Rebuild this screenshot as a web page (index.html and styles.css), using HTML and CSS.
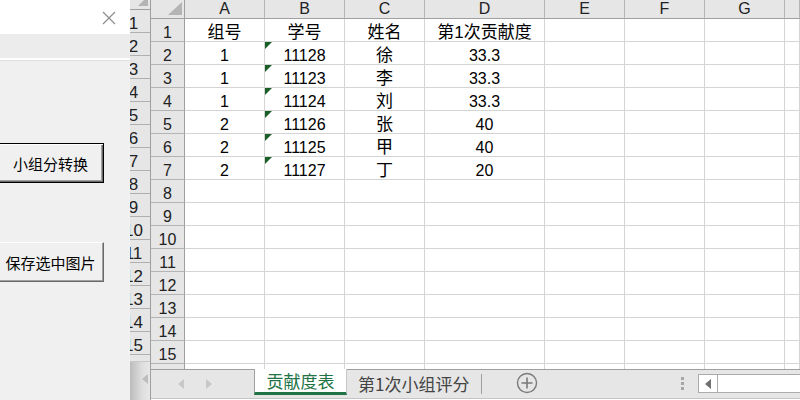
FILE: index.html
```html
<!DOCTYPE html>
<html lang="zh">
<head>
    <meta charset="UTF-8">
    <title>贡献度表</title>
    <link rel="stylesheet" href="styles.css">
</head>
<body>
<div class="app">
    <div class="panel">
        <div class="panel-title">
            <svg class="close" width="14" height="14" viewBox="0 0 14 14"><path d="M1 1L13 13M13 1L1 13" stroke="#8a8a8a" stroke-width="1.1" fill="none"/></svg>
        </div>
        <div class="panel-bar"></div>
        <div class="panel-body">
            <button class="btn btn-default">小组分转换</button>
            <button class="btn">保存选中图片</button>
        </div>
    </div>

    <div class="strip">
        <div class="strip-inner">
            <div class="strip-head"></div>
            <div class="strip-row">1</div>
            <div class="strip-row">2</div>
            <div class="strip-row">3</div>
            <div class="strip-row">4</div>
            <div class="strip-row">5</div>
            <div class="strip-row">6</div>
            <div class="strip-row">7</div>
            <div class="strip-row">8</div>
            <div class="strip-row">9</div>
            <div class="strip-row">10</div>
            <div class="strip-row">11</div>
            <div class="strip-row">12</div>
            <div class="strip-row">13</div>
            <div class="strip-row">14</div>
            <div class="strip-row">15</div>
        </div>
        <div class="strip-foot"><span class="tri-left light"></span></div>
    </div>

    <div class="sheet">
        <div class="grid-wrap">
            <table class="grid">
                <colgroup>
                    <col style="width:34px"><col style="width:80px"><col style="width:80px"><col style="width:80px">
                    <col style="width:120px"><col style="width:80px"><col style="width:80px"><col style="width:80px"><col style="width:15px">
                </colgroup>
                <thead>
                    <tr><th class="corner"></th><th>A</th><th>B</th><th>C</th><th>D</th><th>E</th><th>F</th><th>G</th><th></th></tr>
                </thead>
                <tbody>
                    <tr><th>1</th><td class="zh">组号</td><td class="zh">学号</td><td class="zh">姓名</td><td class="zh">第1次贡献度</td><td></td><td></td><td></td><td></td></tr>
                    <tr><th>2</th><td>1</td><td class="note">11128</td><td class="zh">徐</td><td>33.3</td><td></td><td></td><td></td><td></td></tr>
                    <tr><th>3</th><td>1</td><td class="note">11123</td><td class="zh">李</td><td>33.3</td><td></td><td></td><td></td><td></td></tr>
                    <tr><th>4</th><td>1</td><td class="note">11124</td><td class="zh">刘</td><td>33.3</td><td></td><td></td><td></td><td></td></tr>
                    <tr><th>5</th><td>2</td><td class="note">11126</td><td class="zh">张</td><td>40</td><td></td><td></td><td></td><td></td></tr>
                    <tr><th>6</th><td>2</td><td class="note">11125</td><td class="zh">甲</td><td>40</td><td></td><td></td><td></td><td></td></tr>
                    <tr><th>7</th><td>2</td><td class="note">11127</td><td class="zh">丁</td><td>20</td><td></td><td></td><td></td><td></td></tr>
                    <tr><th>8</th><td></td><td></td><td></td><td></td><td></td><td></td><td></td><td></td></tr>
                    <tr><th>9</th><td></td><td></td><td></td><td></td><td></td><td></td><td></td><td></td></tr>
                    <tr><th>10</th><td></td><td></td><td></td><td></td><td></td><td></td><td></td><td></td></tr>
                    <tr><th>11</th><td></td><td></td><td></td><td></td><td></td><td></td><td></td><td></td></tr>
                    <tr><th>12</th><td></td><td></td><td></td><td></td><td></td><td></td><td></td><td></td></tr>
                    <tr><th>13</th><td></td><td></td><td></td><td></td><td></td><td></td><td></td><td></td></tr>
                    <tr><th>14</th><td></td><td></td><td></td><td></td><td></td><td></td><td></td><td></td></tr>
                    <tr><th>15</th><td></td><td></td><td></td><td></td><td></td><td></td><td></td><td></td></tr>
                    <tr><th>16</th><td></td><td></td><td></td><td></td><td></td><td></td><td></td><td></td></tr>
                </tbody>
            </table>
        </div>

        <div class="tabbar">
            <div class="tab-nav">
                <span class="tri-left"></span>
                <span class="tri-right"></span>
            </div>
            <div class="tab tab-active">贡献度表</div>
            <div class="tab">第1次小组评分</div>
            <div class="tab-sep"></div>
            <svg class="add-sheet" width="22" height="22" viewBox="0 0 22 22">
                <circle cx="11" cy="11" r="9.5" stroke="#7a7a7a" stroke-width="1.4" fill="none"/>
                <path d="M11 5.5V16.5M5.5 11H16.5" stroke="#7a7a7a" stroke-width="1.6"/>
            </svg>
            <div class="spacer"></div>
            <div class="dots"><i></i><i></i><i></i></div>
            <div class="hscroll">
                <div class="hscroll-btn"><span class="tri-left dark"></span></div>
            </div>
        </div>
    </div>
</div>
</body>
</html>
```

FILE: styles.css
```css
body {
    margin: 0;
    font-family: "Liberation Sans", "Noto Sans CJK SC", sans-serif;
    background: #fff;
}
.app {
    display: flex;
    width: 800px;
    height: 400px;
    overflow: hidden;
}

/* 左侧窗体 */
.panel {
    width: 130px;
    flex: none;
    display: flex;
    flex-direction: column;
    background: #f0f0f0;
}
.panel-title {
    height: 34px;
    background: #fff;
    display: flex;
    align-items: center;
    justify-content: flex-end;
    padding-right: 14px;
}
.close {
    margin-top: 1px;
}
.panel-bar {
    height: 24px;
    background: #ececec;
    border-bottom: 2px solid #fff;
}
.panel-body {
    flex: 1;
    display: flex;
    flex-direction: column;
    border-top: 1px solid #e0e0e0;
    padding-top: 82px;
    gap: 59px;
}
.btn {
    width: 107px;
    height: 40px;
    margin-left: -3px;
    padding: 0;
    font-family: "Noto Sans CJK SC", sans-serif;
    font-size: 15px;
    color: #000;
    background: #f0f0f0;
    border: 1px solid;
    border-color: #fff #696969 #696969 #fff;
    box-shadow: inset -1px -1px #a0a0a0;
}
.btn-default {
    border-color: #000;
    box-shadow: inset 1px 1px #fff, inset -1px -1px #696969, inset -2px -2px #a0a0a0;
}

/* 后面窗口露出的行号 */
.strip {
    width: 20px;
    flex: none;
    display: flex;
    flex-direction: column;
    overflow: hidden;
    background: #e6e6e6;
    border-right: 1px solid #9f9f9f;
}
.strip-inner {
    width: 35px;
    margin-left: -14px;
    margin-top: -8px;
}
.strip-head {
    height: 18px;
    box-sizing: border-box;
    border-bottom: 1px solid #9f9f9f;
    position: relative;
}
.strip-head::after {
    content: "";
    position: absolute;
    right: 3px;
    bottom: 3px;
    border-left: 10px solid transparent;
    border-bottom: 10px solid #b4b4b4;
}
.strip-row {
    height: 23px;
    box-sizing: border-box;
    border-bottom: 1px solid #b0b0b0;
    text-align: center;
    padding-top: 6px;
    line-height: 16px;
    font-size: 17px;
    color: #222;
}
.strip-foot {
    flex: 1;
    margin-top: 6px;
    border-top: 1px solid #c8c8c8;
    background: linear-gradient(to right, #bcbcbc, #dedede 60%, #e8e8e8);
    display: flex;
    justify-content: flex-end;
    padding: 12px 2px 0 0;
}

/* 表格 */
.sheet {
    flex: 1;
    display: flex;
    flex-direction: column;
    min-width: 0;
}
.grid-wrap {
    height: 369px;
    flex: none;
    overflow: hidden;
}
.grid {
    border-collapse: separate;
    border-spacing: 0;
    table-layout: fixed;
    width: 649px;
}
.grid th,
.grid td {
    box-sizing: border-box;
    height: 23px;
    padding: 5px 0 0;
    border-right: 1px solid #d4d4d4;
    border-bottom: 1px solid #d4d4d4;
    text-align: center;
    font-size: 16px;
    font-weight: normal;
    color: #000;
    white-space: nowrap;
    overflow: hidden;
    line-height: 17px;
}
.grid td.zh {
    font-size: 17px;
}
.grid thead th {
    height: 18px;
    padding: 0;
    line-height: 18px;
    background: #e6e6e6;
    color: #222;
    border-right-color: #b4b4b4;
    border-bottom: 1px solid #9f9f9f;
}
.grid tbody th {
    background: #e6e6e6;
    color: #222;
    border-right: 1px solid #9f9f9f;
    border-bottom-color: #b4b4b4;
}
.grid th.corner {
    position: relative;
    border-right-color: #9f9f9f;
}
.grid th.corner::after {
    content: "";
    position: absolute;
    right: 2px;
    bottom: 3px;
    border-left: 14px solid transparent;
    border-bottom: 13px solid #b4b4b4;
}
.grid td.note {
    position: relative;
}
.grid td.note::before {
    content: "";
    position: absolute;
    left: 0;
    top: 0;
    border-top: 7px solid #1a5e28;
    border-right: 7px solid transparent;
}

/* 工作表标签 */
.tabbar {
    flex: 1;
    display: flex;
    align-items: flex-start;
    background: #e6e6e6;
    border-top: 1px solid #9f9f9f;
    border-bottom: 1px solid #c4c4c4;
    margin-bottom: 1px;
}
.tab-nav {
    width: 103px;
    height: 28px;
    flex: none;
    display: flex;
    align-items: center;
    gap: 22px;
    padding-left: 27px;
    box-sizing: border-box;
}
.tri-left,
.tri-right {
    display: inline-block;
    width: 0;
    height: 0;
    border-top: 5px solid transparent;
    border-bottom: 5px solid transparent;
}
.tri-left {
    border-right: 6px solid #c8c8c8;
}
.tri-right {
    border-left: 6px solid #c8c8c8;
}
.tri-left.light {
    border-right-color: #bdbdbd;
}
.tri-left.dark {
    border-right-color: #707070;
}
.tab {
    height: 24px;
    display: flex;
    align-items: center;
    padding: 0 12px 0 11px;
    font-family: "Noto Sans CJK SC", sans-serif;
    font-size: 17px;
    color: #444;
    margin-top: 1px;
}
.tab-active {
    width: 93px;
    box-sizing: border-box;
    justify-content: center;
    padding: 0;
    margin-top: -1px;
    height: 26px;
    background: #fff;
    color: #217346;
    border-left: 1px solid #9f9f9f;
    border-right: 1px solid #c8c8c8;
    border-bottom: 3px solid #217346;
}
.tab-sep {
    width: 1px;
    height: 20px;
    margin-top: 4px;
    background: #9f9f9f;
}
.add-sheet {
    margin: 2px 0 0 34px;
}
.spacer {
    flex: 1;
}
.dots {
    display: flex;
    flex-direction: column;
    gap: 2px;
    margin-top: 7px;
}
.dots i {
    width: 3px;
    height: 3px;
    background: #a6a6a6;
}
.hscroll {
    width: 102px;
    height: 19px;
    margin: 4px 0 0 14px;
    box-sizing: border-box;
    background: #fff;
    border: 1px solid #ababab;
    border-right: none;
    display: flex;
}
.hscroll-btn {
    width: 19px;
    box-sizing: border-box;
    border-right: 1px solid #ababab;
    display: flex;
    align-items: center;
    justify-content: center;
}
```
